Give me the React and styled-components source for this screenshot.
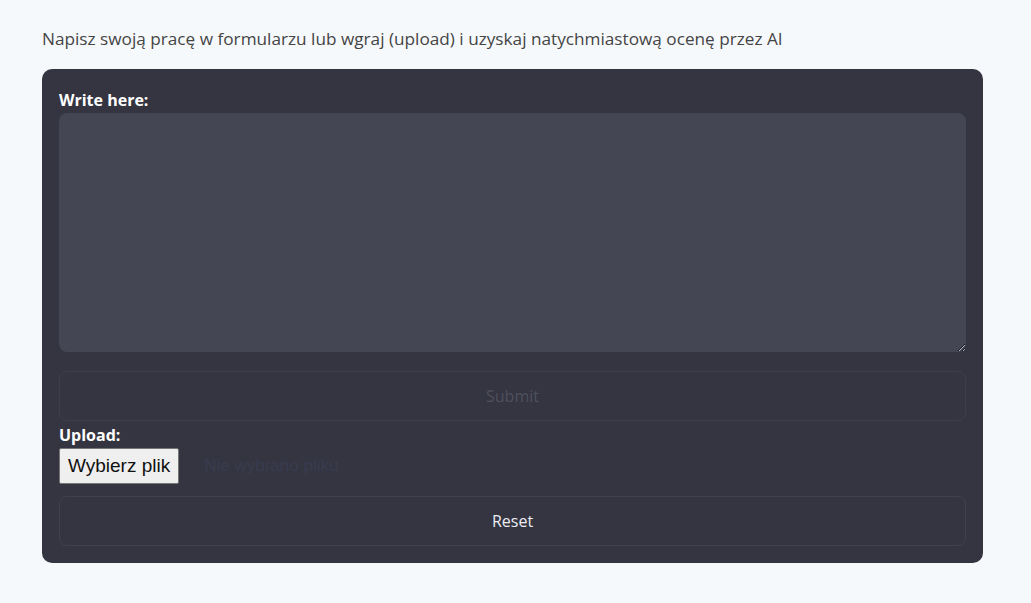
import React from "react";
import styled, { createGlobalStyle } from "styled-components";

const Global = createGlobalStyle`
  html, body { margin: 0; padding: 0; background: #f6f9fc; }
  body { font-family: "Open Sans", "Noto Sans", sans-serif; }
`;

const Page = styled.div`
  padding: 26px 48px 40px 42px;
`;

const Intro = styled.p`
  margin: 0 0 18px;
  font-size: 17.2px;
  line-height: 25px;
  color: #454545;
`;

const Card = styled.form`
  width: 941px;
  box-sizing: border-box;
  background: #343541;
  border-radius: 10px;
  padding: 21px 17px 17px;
  display: flex;
  flex-direction: column;
`;

const Label = styled.label`
  display: block;
  color: #ffffff;
  font-weight: 700;
  font-size: 16px;
  line-height: 20px;
  margin: ${(p) => p.$m || "0"};
`;

const TextArea = styled.textarea`
  display: block;
  box-sizing: border-box;
  width: 100%;
  height: 239px;
  margin-top: 3px;
  border: none;
  border-radius: 8px;
  background: #444654;
  color: #fff;
  padding: 10px;
  font: inherit;
  outline: none;
`;

const ActionButton = styled.button`
  box-sizing: border-box;
  width: 100%;
  height: 50px;
  margin-top: ${(p) => p.$mt || "0"};
  background: transparent;
  border: 1px solid ${(p) => (p.disabled ? "#3d3e4b" : "#40414e")};
  border-radius: 8px;
  font-family: inherit;
  font-size: 16px;
  color: ${(p) => (p.disabled ? "#4e505d" : "#ececf1")};
  cursor: ${(p) => (p.disabled ? "default" : "pointer")};
`;

const FileRow = styled.div`
  display: flex;
  align-items: center;
  gap: 25px;
  margin-top: 3px;
`;

const FileButton = styled.span`
  box-sizing: border-box;
  height: 36px;
  padding: 0 8px;
  display: inline-flex;
  align-items: center;
  background: #efefef;
  border: 1px solid #767676;
  border-radius: 2px;
  font-family: "Liberation Sans", Arial, sans-serif;
  font-size: 19px;
  color: #111;
`;

const FileName = styled.span`
  font-family: "Liberation Sans", Arial, sans-serif;
  font-size: 17px;
  color: #393c4f;
`;

export default function App() {
  return (
    <>
      <Global />
      <Page>
        <Intro>
          Napisz swoją pracę w formularzu lub wgraj (upload) i uzyskaj natychmiastową ocenę przez AI
        </Intro>
        <Card onSubmit={(e) => e.preventDefault()}>
          <Label htmlFor="essay">Write here:</Label>
          <TextArea id="essay" />
          <ActionButton disabled $mt="19px">Submit</ActionButton>
          <Label $m="4px 0 0">Upload:</Label>
          <FileRow>
            <FileButton>Wybierz plik</FileButton>
            <FileName>Nie wybrano pliku</FileName>
          </FileRow>
          <ActionButton type="button" $mt="12px">Reset</ActionButton>
        </Card>
      </Page>
    </>
  );
}
